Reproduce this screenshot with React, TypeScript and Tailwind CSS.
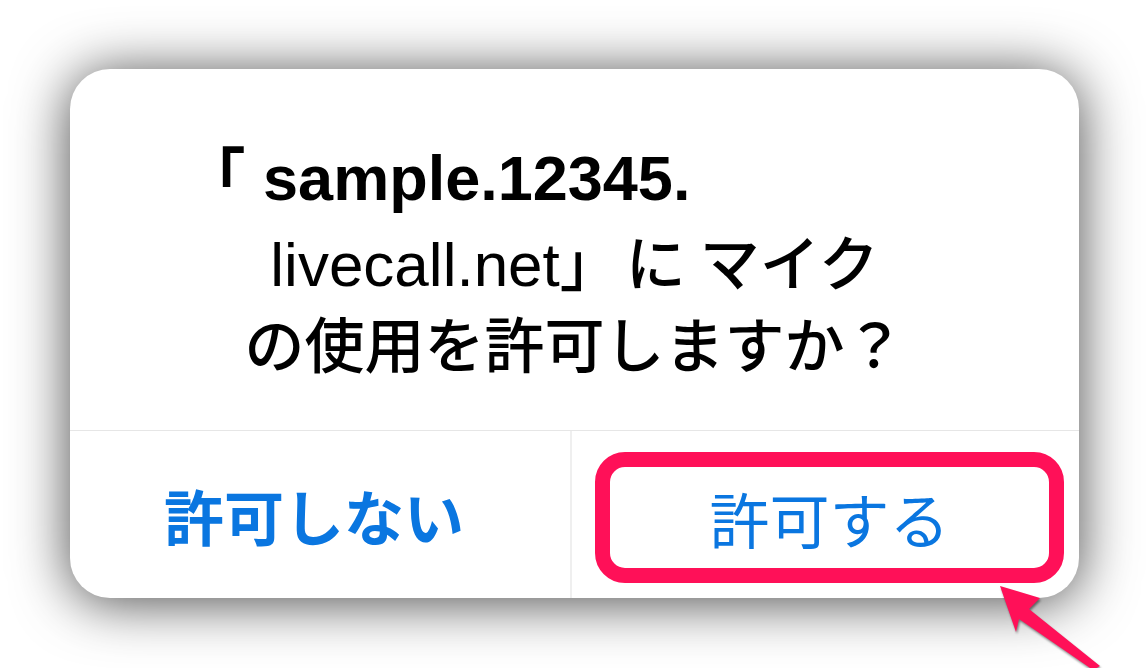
export default function App() {
  return (
    <div className="relative w-[1148px] h-[668px] overflow-hidden bg-white pt-[69px] pl-[70px] font-['Liberation_Sans','Noto_Sans_CJK_JP',sans-serif]">
      {/* Dialog card */}
      <div className="w-[1009px] h-[529px] rounded-[40px] bg-white shadow-[0_4px_56px_rgba(0,0,0,0.72)] flex flex-col overflow-hidden">
        {/* Message */}
        <div className="h-[361px] pt-[68px] flex flex-col items-center text-black leading-[82px]">
          <p className="h-[82px] text-[63px] font-bold pr-[276px] whitespace-nowrap">「 sample.12345.</p>
          <p className="h-[82px] whitespace-nowrap">
            <span className="text-[62px]">livecall.net</span>
            <span className="text-[60px] font-medium font-['Noto_Sans_CJK_JP',sans-serif]">
              」<span className="ml-[6px]">に</span>
              <span className="ml-[14px]">マイク</span>
            </span>
          </p>
          <p className="h-[82px] text-[60px] font-medium whitespace-nowrap font-['Noto_Sans_CJK_JP',sans-serif]">
            の使用を許可しますか？
          </p>
        </div>

        {/* Buttons */}
        <div className="flex flex-1 border-t border-[#e6e6e6]">
          <div className="w-[502px] border-r-2 border-[#efefef] flex items-center justify-center pr-[12px]">
            <span className="text-[60px] font-bold text-[#0a76e0] font-['Noto_Sans_CJK_JP',sans-serif]">許可しない</span>
          </div>
          <div className="flex-1 pl-[23px] pr-[15px] pt-[21px] pb-[15px]">
            <div className="h-full rounded-[30px] border-[15px] border-[#ff1058] flex items-center justify-center">
              <span className="text-[60px] text-[#0a76e0] font-['Noto_Sans_CJK_JP',sans-serif]">許可する</span>
            </div>
          </div>
        </div>
      </div>

      {/* Pointer arrow */}
      <svg
        className="absolute left-0 top-0 drop-shadow-[1px_2px_1px_rgba(0,0,0,0.45)]"
        width="1148"
        height="668"
        viewBox="0 0 1148 668"
      >
        <polygon
          points="1000,586 1040,598 1029,609 1100,666 1093,670 1019,619 1016,632"
          fill="#ff1058"
        />
      </svg>
    </div>
  );
}
